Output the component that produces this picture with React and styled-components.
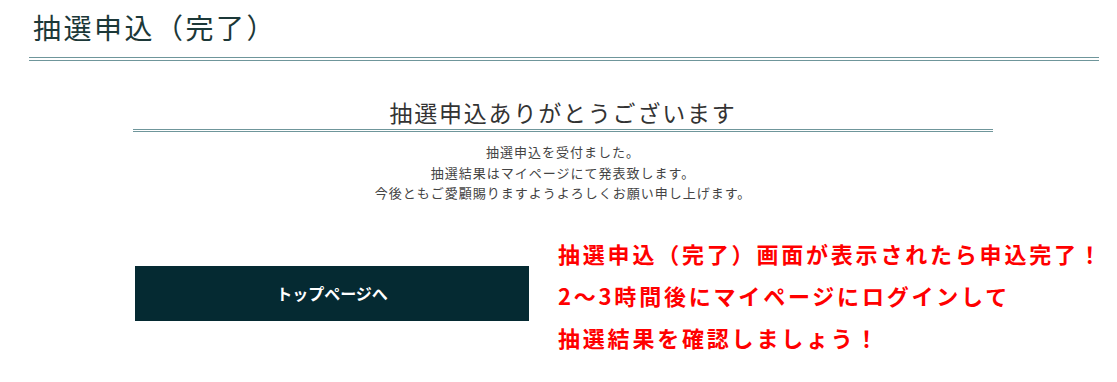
import React from "react";
import styled, { createGlobalStyle } from "styled-components";

const GlobalStyle = createGlobalStyle`
  html, body {
    margin: 0;
    padding: 0;
    background: #fff;
  }
  body {
    font-family: "Noto Sans CJK JP", "Noto Sans", sans-serif;
  }
`;

const Page = styled.div`
  width: 1117px;
  height: 382px;
  overflow: hidden;
`;

const PageHeader = styled.header`
  margin-left: 29px;
  width: 1070px;
  padding: 6px 0 9px 4px;
  box-sizing: border-box;
  border-bottom: 4px double #6f969b;
`;

const PageTitle = styled.h1`
  margin: 0;
  font-size: 28px;
  line-height: 42px;
  font-weight: 400;
  letter-spacing: 2.5px;
  color: #1c3838;
`;

const Content = styled.main`
  width: 860px;
  margin: 35px auto 0 133px;
`;

const Heading = styled.h2`
  margin: 0;
  padding-bottom: 1px;
  font-size: 23px;
  line-height: 32px;
  font-weight: 400;
  letter-spacing: 1.8px;
  text-align: center;
  color: #333;
  border-bottom: 3px double #6f969b;
`;

const Message = styled.p`
  margin: 10px 0 0;
  font-size: 13px;
  line-height: 20.5px;
  letter-spacing: 1px;
  text-align: center;
  color: #444;
`;

const ActionRow = styled.div`
  display: flex;
  align-items: flex-start;
  gap: 29px;
  margin-top: 28px;
  padding-left: 2px;
`;

const TopButton = styled.a`
  display: flex;
  align-items: center;
  justify-content: center;
  flex: 0 0 394px;
  height: 55px;
  margin-top: 34px;
  background: #052a32;
  color: #fff;
  font-size: 16px;
  font-weight: 700;
  text-decoration: none;
  cursor: pointer;
`;

const Note = styled.p`
  margin: 0;
  white-space: nowrap;
  font-size: 22px;
  line-height: 42px;
  font-weight: 700;
  letter-spacing: 2.8px;
  color: #ff0000;
`;

export default function App() {
  return (
    <Page>
      <GlobalStyle />
      <PageHeader>
        <PageTitle>抽選申込（完了）</PageTitle>
      </PageHeader>
      <Content>
        <Heading>抽選申込ありがとうございます</Heading>
        <Message>
          抽選申込を受付ました。
          <br />
          抽選結果はマイページにて発表致します。
          <br />
          今後ともご愛顧賜りますようよろしくお願い申し上げます。
        </Message>
        <ActionRow>
          <TopButton>トップページへ</TopButton>
          <Note>
            抽選申込（完了）画面が表示されたら申込完了！
            <br />
            2～3時間後にマイページにログインして
            <br />
            抽選結果を確認しましょう！
          </Note>
        </ActionRow>
      </Content>
    </Page>
  );
}
